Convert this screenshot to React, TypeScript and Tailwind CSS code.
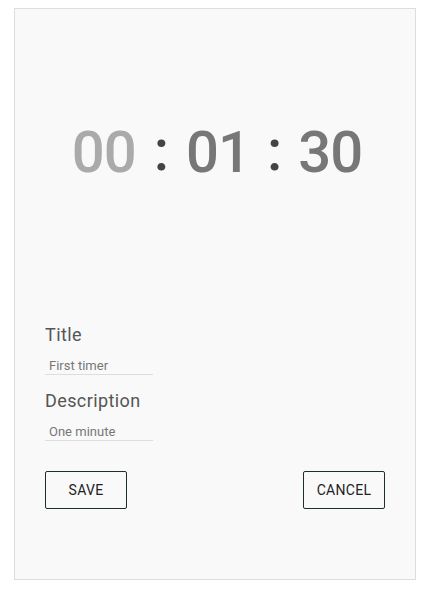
export default function App() {
  return (
    <div className="min-h-screen bg-white pt-2" style={{ fontFamily: "Roboto, 'Liberation Sans', sans-serif" }}>
      <div className="ml-[14px] mr-[13px] h-[572px] border border-[#dddddd] bg-[#f9f9f9] flex flex-col">
        <div className="h-[283px] flex items-center justify-center pl-[4px] pt-[3px]">
          <div className="flex items-center text-[58px] font-medium leading-none tracking-[-1px]">
            <span className="text-[#aaaaaa]">00</span>
            <span className="text-[#444444] mx-[18px] relative -top-[2px]">:</span>
            <span className="text-[#777777]">01</span>
            <span className="text-[#444444] mx-[17px] relative -top-[2px]">:</span>
            <span className="text-[#777777]">30</span>
          </div>
        </div>
        <div className="px-[30px] flex flex-col">
          <label className="text-[18px] text-[#555555] tracking-[0.4px] leading-[24px] mt-[31px]">Title</label>
          <input
            className="mt-[11px] w-[108px] border-b border-[#dddddd] bg-transparent px-[4px] text-[13px] leading-[16px] text-[#555555] outline-none placeholder:text-[#777777]"
            placeholder="First timer"
          />
          <label className="text-[18px] text-[#555555] tracking-[0.4px] leading-[24px] mt-[14px]">Description</label>
          <input
            className="mt-[11px] w-[108px] border-b border-[#dddddd] bg-transparent px-[4px] text-[13px] leading-[16px] text-[#555555] outline-none placeholder:text-[#777777]"
            placeholder="One minute"
          />
          <div className="mt-[30px] flex justify-between">
            <button className="h-[38px] w-[82px] rounded-[2px] border border-[#1e2d2d] text-[14px] text-[#222222] tracking-[0.3px]">SAVE</button>
            <button className="h-[38px] w-[82px] rounded-[2px] border border-[#1e2d2d] text-[14px] text-[#222222] tracking-[0.3px]">CANCEL</button>
          </div>
        </div>
      </div>
    </div>
  );
}
